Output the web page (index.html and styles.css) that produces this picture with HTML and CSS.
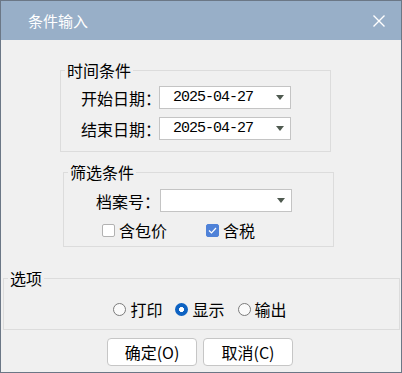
FILE: index.html
```html
<!DOCTYPE html>
<html lang="zh-CN">
<head>
<meta charset="utf-8">
<title>条件输入</title>
<link rel="stylesheet" href="styles.css">
</head>
<body>
<div class="window">
  <div class="titlebar">
    <span class="title">条件输入</span>
    <svg class="close" width="12" height="12" viewBox="0 0 12 12"><path d="M0.5 0.5 L11.5 11.5 M11.5 0.5 L0.5 11.5" stroke="#fff" stroke-width="1.4" fill="none"/></svg>
  </div>
  <div class="content">
    <fieldset class="group group-time">
      <legend>时间条件</legend>
      <div class="row row-date">
        <span class="label">开始日期：</span>
        <div class="combo"><span class="value">2025-04-27</span><span class="arrow"></span></div>
      </div>
      <div class="row row-date row-second">
        <span class="label">结束日期：</span>
        <div class="combo"><span class="value">2025-04-27</span><span class="arrow"></span></div>
      </div>
    </fieldset>
    <fieldset class="group group-filter">
      <legend>筛选条件</legend>
      <div class="row row-file">
        <span class="label label-short">档案号：</span>
        <div class="combo"><span class="value"></span><span class="arrow"></span></div>
      </div>
      <div class="checks">
        <label class="check-item"><span class="checkbox"></span>含包价</label>
        <label class="check-item"><span class="checkbox checked"><svg width="9" height="7" viewBox="0 0 9 7"><path d="M1 3.5 L3.5 6 L8 1" stroke="#fff" stroke-width="1.2" fill="none"/></svg></span>含税</label>
      </div>
    </fieldset>
    <fieldset class="group group-options">
      <legend>选项</legend>
      <div class="radios">
        <label class="radio-item"><span class="radio"></span>打印</label>
        <label class="radio-item"><span class="radio selected"></span>显示</label>
        <label class="radio-item"><span class="radio"></span>输出</label>
      </div>
    </fieldset>
    <div class="buttons">
      <button class="btn">确定(O)</button>
      <button class="btn">取消(C)</button>
    </div>
  </div>
</div>
</body>
</html>
```
FILE: styles.css
```css
* { box-sizing: border-box; }
html, body { margin: 0; padding: 0; }
body {
  width: 402px;
  height: 373px;
  font-family: "Noto Sans CJK SC", "Microsoft YaHei", sans-serif;
  font-size: 16px;
  color: #000;
  background: #f0f0f0;
}
.window {
  width: 402px;
  height: 373px;
  border: 1px solid #6b7786;
  background: #f0f0f0;
  display: flex;
  flex-direction: column;
}
.titlebar {
  height: 39px;
  background: #98afc8;
  display: flex;
  align-items: center;
  justify-content: space-between;
  padding: 0 16px 0 27px;
  flex: none;
}
.title {
  color: #fff;
  font-size: 15px;
  line-height: 18px;
}
.close { display: block; }
.content {
  flex: 1;
  display: flex;
  flex-direction: column;
}
.group {
  border: 1px solid #dcdcdc;
  margin: 0;
  padding: 0;
  min-width: 0;
}
.group legend {
  font-size: 16px;
  line-height: 18px;
  padding: 0 2px;
  margin-left: 4px;
}
.group-time {
  margin: 21px 0 0 59px;
  width: 271px;
  padding: 7px 0 11px 0;
}
.group-filter {
  margin: 11px 0 0 62px;
  width: 271px;
  padding: 8px 0 7px 0;
}
.group-options {
  margin: 22px 0 0 2px;
  width: 397px;
  padding: 13px 0 11px 0;
}
.row {
  display: flex;
  align-items: center;
  height: 23px;
}
.row-date { padding-left: 20px; }
.row-second { margin-top: 8px; }
.label {
  width: 78px;
  white-space: nowrap;
  line-height: 20px;
}
.row-file { padding-left: 32px; }
.label-short { width: 64px; }
.combo {
  width: 132px;
  height: 23px;
  background: #fff;
  border: 1px solid #c4c4c4;
  display: flex;
  align-items: center;
  justify-content: space-between;
  padding: 0 6px 0 13px;
}
.value {
  font-family: "Liberation Mono", monospace;
  font-size: 15px;
  letter-spacing: -1px;
  color: #000;
  line-height: 20px;
}
.arrow {
  width: 0;
  height: 0;
  border-left: 4.5px solid transparent;
  border-right: 4.5px solid transparent;
  border-top: 5px solid #4f5a50;
}
.checks {
  display: flex;
  align-items: center;
  height: 18px;
  margin-top: 9px;
  padding-left: 38px;
}
.check-item {
  display: flex;
  align-items: center;
  gap: 4px;
  line-height: 18px;
}
.check-item + .check-item { margin-left: 39px; }
.checkbox {
  width: 13px;
  height: 13px;
  border: 1px solid #b2b2b2;
  border-radius: 2px;
  background: #fff;
  display: flex;
  align-items: center;
  justify-content: center;
}
.checkbox.checked {
  background: #4f82d8;
  border-color: #4f82d8;
}
.checkbox svg { display: block; }
.radios {
  display: flex;
  justify-content: center;
  gap: 13px;
  height: 18px;
  align-items: center;
  padding-right: 3px;
}
.radio-item {
  display: flex;
  align-items: center;
  gap: 4px;
  line-height: 18px;
}
.radio {
  width: 13px;
  height: 13px;
  border-radius: 50%;
  border: 1px solid #7b7b7b;
  background: #fafafa;
}
.radio.selected {
  border: none;
  background: radial-gradient(circle, #fff 0 2.2px, #0d62c2 2.8px);
}
.buttons {
  display: flex;
  justify-content: center;
  gap: 6px;
  margin-top: 8px;
  padding-right: 2px;
}
.btn {
  width: 90px;
  height: 28px;
  background: #fff;
  border: 1px solid #c6c6c6;
  border-radius: 4px;
  font-family: "Noto Sans CJK SC", "Microsoft YaHei", sans-serif;
  font-size: 16px;
  line-height: 20px;
  color: #000;
  padding: 0;
}
```
